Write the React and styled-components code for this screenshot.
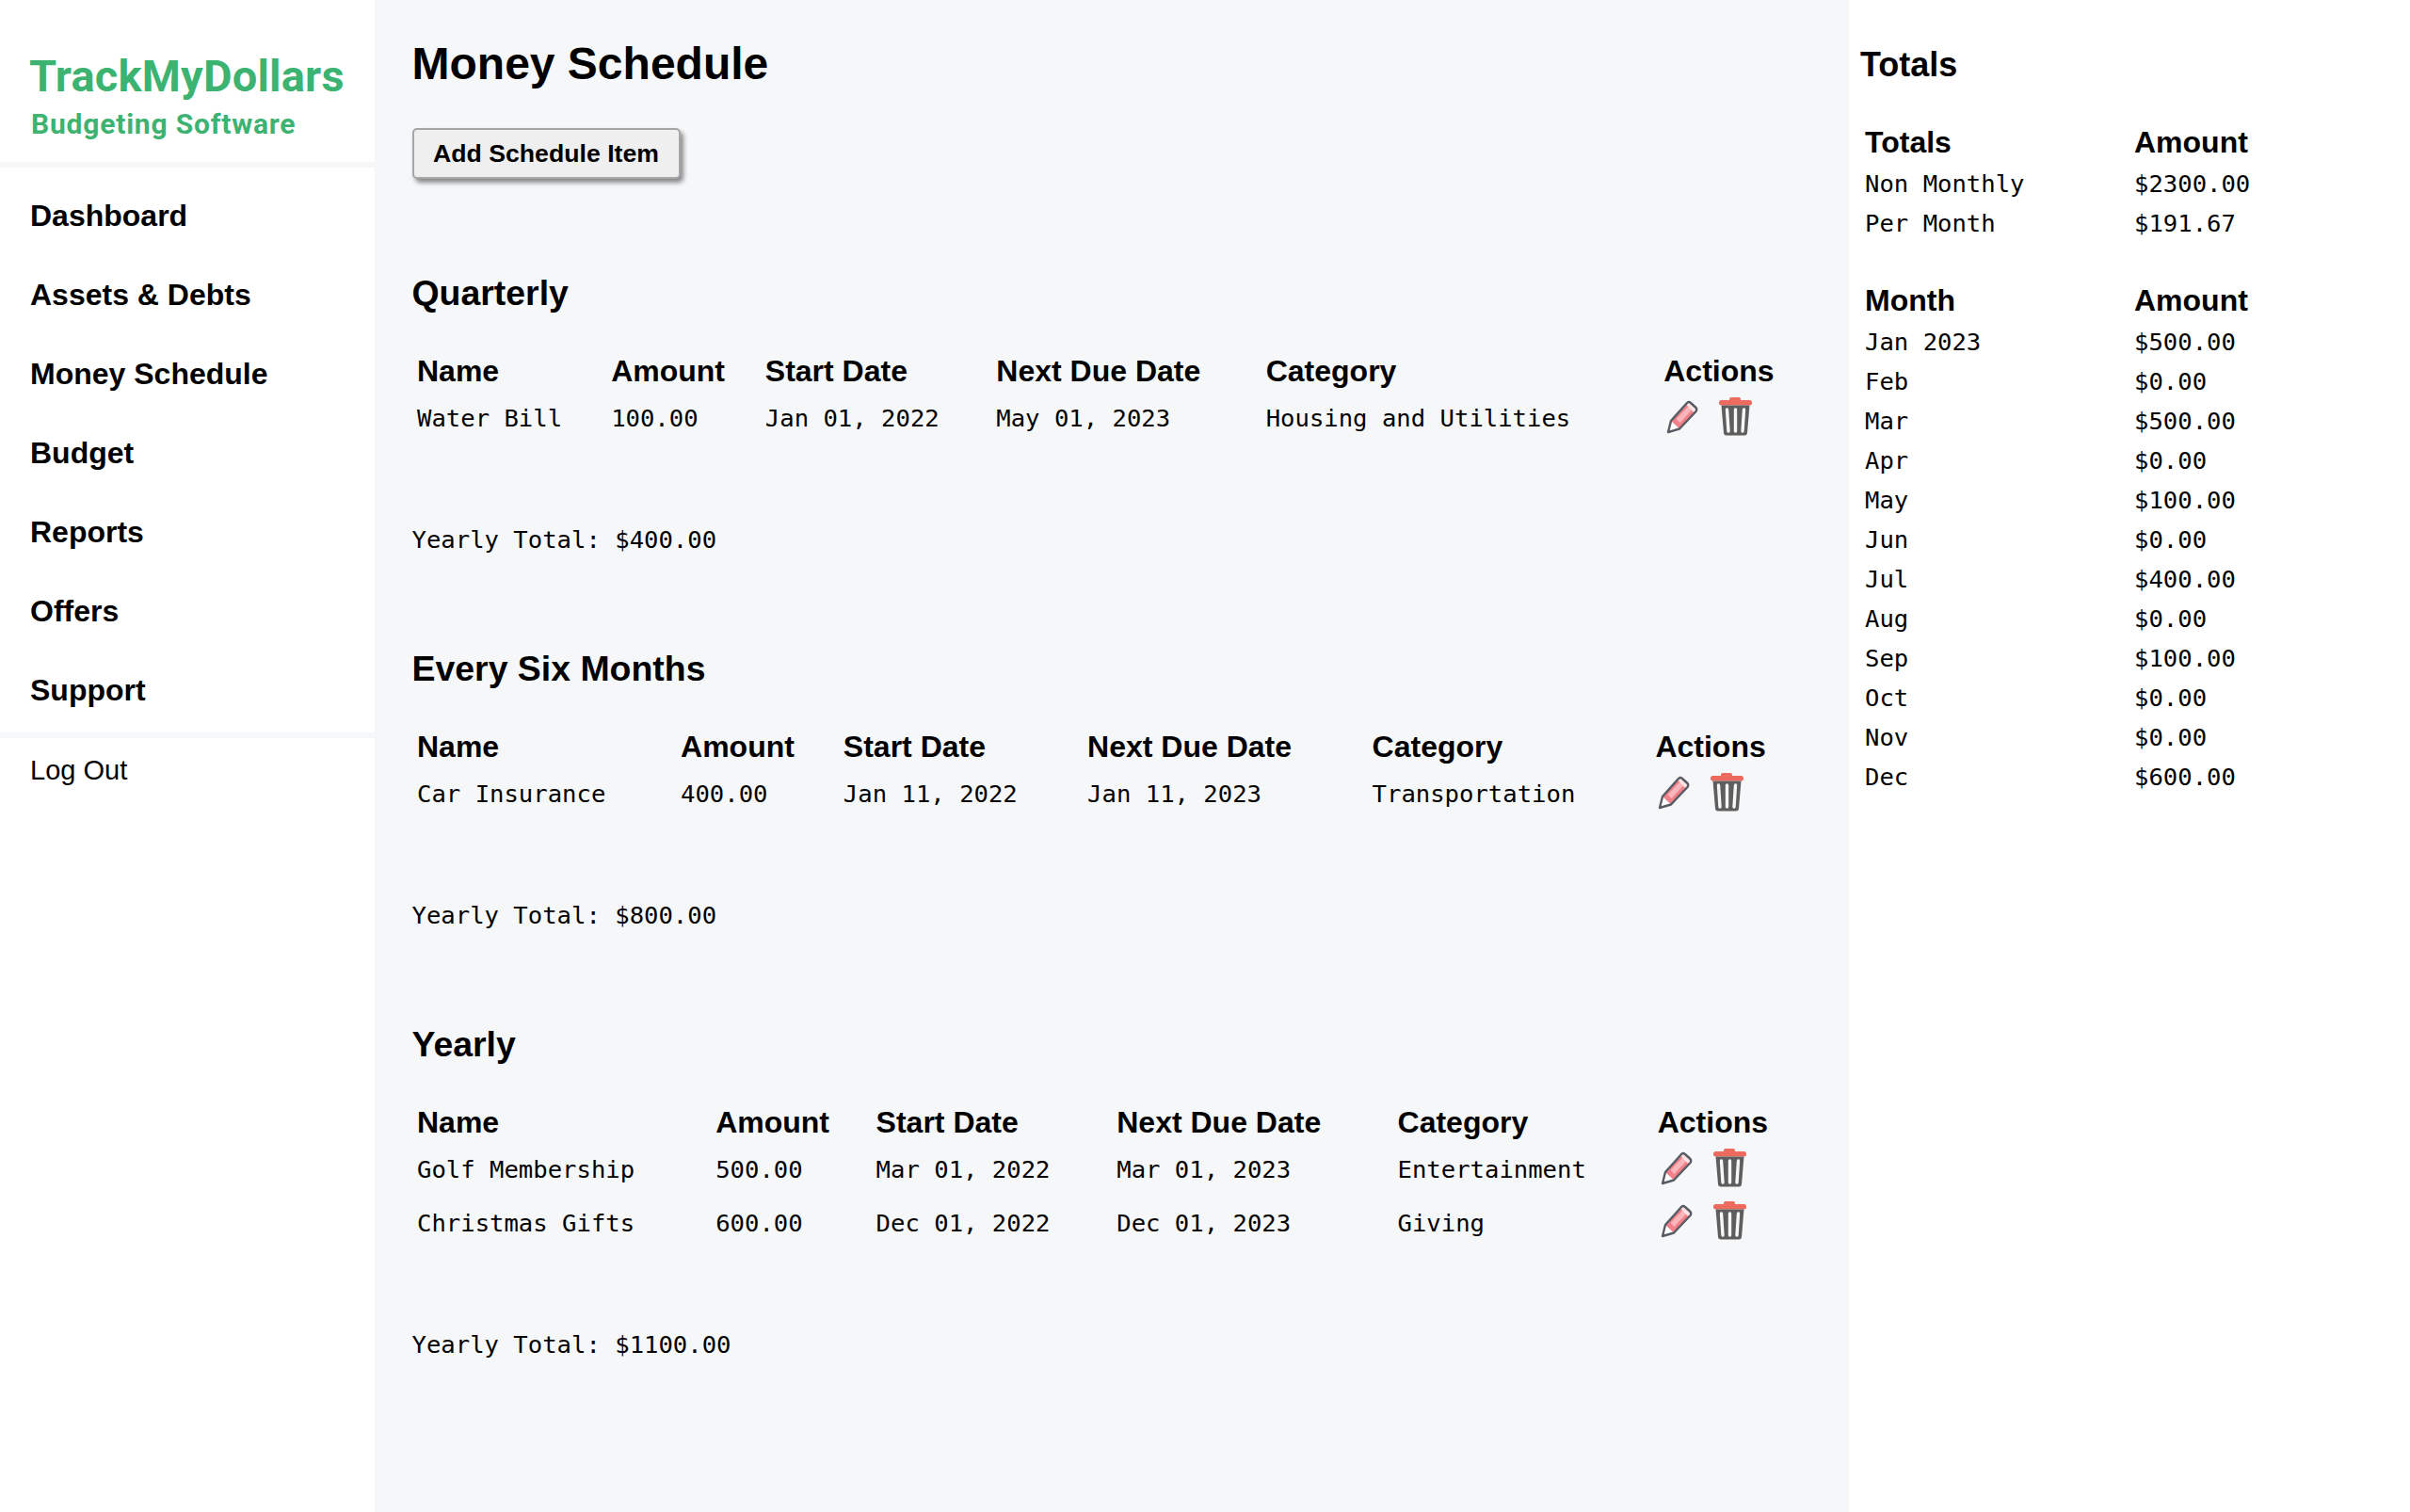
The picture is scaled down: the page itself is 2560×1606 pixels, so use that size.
import React from 'react'
import styled, {createGlobalStyle} from 'styled-components'

const GlobalStyle = createGlobalStyle`
  html, body {
    margin: 0;
    padding: 0;
    background: #fff;
    color: #000;
  }
  body {
    font-family: "Liberation Sans", Arial, sans-serif;
  }
`

const navItems = ['Dashboard', 'Assets & Debts', 'Money Schedule', 'Budget', 'Reports', 'Offers', 'Support']

const sections = [
  {
    title: 'Quarterly',
    total: '$400.00',
    rows: [['Water Bill', '100.00', 'Jan 01, 2022', 'May 01, 2023', 'Housing and Utilities']],
  },
  {
    title: 'Every Six Months',
    total: '$800.00',
    rows: [['Car Insurance', '400.00', 'Jan 11, 2022', 'Jan 11, 2023', 'Transportation']],
  },
  {
    title: 'Yearly',
    total: '$1100.00',
    rows: [
      ['Golf Membership', '500.00', 'Mar 01, 2022', 'Mar 01, 2023', 'Entertainment'],
      ['Christmas Gifts', '600.00', 'Dec 01, 2022', 'Dec 01, 2023', 'Giving'],
    ],
  },
]

const months = [
  ['Jan 2023', '$500.00'], ['Feb', '$0.00'], ['Mar', '$500.00'], ['Apr', '$0.00'],
  ['May', '$100.00'], ['Jun', '$0.00'], ['Jul', '$400.00'], ['Aug', '$0.00'],
  ['Sep', '$100.00'], ['Oct', '$0.00'], ['Nov', '$0.00'], ['Dec', '$600.00'],
]

const PencilIcon = () => (
  <svg width="40" height="40" viewBox="0 0 40 40">
    <path d="M5 37 L8 25 L25 6 Q27 4 29 6 L34.5 11 Q36 13 34.5 15 L17 33.5 Z" fill="#f0808a" />
    <path d="M13.5 23 L26.5 9.5 L30.5 13 L17.5 27 Z" fill="#f8b6bb" />
    <path d="M24 7.5 L26.5 5 Q27.5 4.5 28.5 5.5 L35 11.5 Q35.5 13 34.5 14.5 L32.5 16.5 Z" fill="#fbe3e4" />
    <path d="M5 37 L8 25 L17 33.5 Z" fill="#fff" />
    <path d="M5 37 L8 25 L25 6 Q27 4 29 6 L34.5 11 Q36 13 34.5 15 L17 33.5 Z" fill="none" stroke="#565b64" strokeWidth="2.4" strokeLinejoin="round" />
  </svg>
)

const TrashIcon = () => (
  <svg width="40" height="44" viewBox="0 0 40 44">
    <path d="M14 4 Q14 2 16 2 H24 Q26 2 26 4 V6 H14 Z" fill="#ec6a5e" />
    <rect x="3" y="5" width="35" height="5.5" rx="2.5" fill="#ec6a5e" />
    <path d="M5.5 10.5 H35.5 L33 40 Q32.7 42.5 30 42.5 H11 Q8.3 42.5 8 40 Z" fill="#5e5e5e" />
    <path d="M11.5 15 L13 38 M20.5 15 V38 M29.5 15 L28 38" stroke="#f6f7f9" strokeWidth="3.4" strokeLinecap="round" fill="none" />
  </svg>
)

const Page = styled.div`
  display: flex;
  min-height: 1606px;
`

const Sidebar = styled.aside`
  width: 398px;
  flex: none;
  background: #fff;
`

const Brand = styled.div`
  padding: 54px 0 0 31px;
  height: 118px;
  border-bottom: 6px solid #f6f7f9;
  color: #3cb371;
  font-family: Roboto, sans-serif;
  font-weight: 700;
`

const BrandName = styled.div`
  font-size: 47px;
  line-height: 54px;
  letter-spacing: 0.2px;
`

const BrandTag = styled.div`
  padding-left: 2px;
  font-size: 30px;
  line-height: 47px;
  letter-spacing: 0.8px;
`

const Nav = styled.nav`
  padding: 9px 0 3px;
  border-bottom: 6px solid #f6f7f9;
`

const NavItem = styled.a`
  display: block;
  padding: 0 32px;
  height: 84px;
  line-height: 84px;
  font-size: 32px;
  font-weight: 700;
  color: #000;
`

const LogOut = styled.a`
  display: block;
  padding: 0 32px;
  margin-top: 7px;
  line-height: 54px;
  font-size: 29px;
  color: #000;
`

const Main = styled.main`
  flex: 1;
  min-width: 0;
  background: #f6f7f9;
  padding: 35px 40px 0 39.5px;
`

const Title = styled.h1`
  margin: 0;
  font-size: 48px;
  line-height: 66px;
  font-weight: 700;
`

const AddButton = styled.button`
  display: block;
  margin-top: 35px;
  width: 285px;
  height: 54px;
  padding: 0;
  background: #efefef;
  border: 2px solid #a6a6a6;
  border-radius: 5px;
  box-shadow: 3px 4px 5px rgba(0, 0, 0, 0.45);
  font-family: inherit;
  font-size: 26.67px;
  font-weight: 700;
  color: #000;
`

const Section = styled.section`
  height: 399px;
  &:first-of-type {
    margin-top: 96px;
  }
`

const SectionTitle = styled.h3`
  margin: 0;
  font-size: 37.44px;
  line-height: 50px;
  font-weight: 700;
`

const ScheduleTable = styled.table`
  width: 100%;
  margin-top: 35px;
  border-spacing: 3.2px;
  border-collapse: separate;
`

const Th = styled.th`
  padding: 1.6px 2.5px;
  text-align: left;
  font-size: 32px;
  font-weight: 700;
  line-height: 37px;
`

const Td = styled.td`
  padding: 1.6px 2.5px;
  height: 50.5px;
  font-family: "DejaVu Sans Mono", monospace;
  font-size: 25.6px;
  white-space: nowrap;
`

const ActionCell = styled(Td)`
  line-height: 0;
`

const IconButton = styled.span`
  display: inline-block;
  vertical-align: middle;
  margin: 0 16px 5px 0;
`

const YearlyTotal = styled.p`
  margin: 84px 0 0;
  font-family: "DejaVu Sans Mono", monospace;
  font-size: 25.6px;
  line-height: 30px;
`

const Aside = styled.aside`
  width: 596px;
  flex: none;
  padding: 47px 0 0 12px;
  box-sizing: border-box;
  background: #fff;
`

const AsideTitle = styled.h3`
  margin: 0 0 37px;
  font-size: 36px;
  line-height: 44px;
  font-weight: 700;
`

const TotalsTable = styled.table`
  border-collapse: collapse;
  margin-bottom: 38px;
`

const TotalsTh = styled.th`
  width: ${({$wide}) => ($wide ? '281px' : 'auto')};
  padding: 0 0 0 5px;
  height: 46px;
  text-align: left;
  font-size: 32px;
  font-weight: 700;
`

const TotalsTd = styled.td`
  padding: 0 0 0 5px;
  height: 42px;
  font-family: "DejaVu Sans Mono", monospace;
  font-size: 25.6px;
`

const App = () => {
  return (
    <>
      <GlobalStyle />
      <Page>
        <Sidebar>
          <Brand>
            <BrandName>TrackMyDollars</BrandName>
            <BrandTag>Budgeting Software</BrandTag>
          </Brand>
          <Nav>
            {navItems.map((item) => <NavItem key={item}>{item}</NavItem>)}
          </Nav>
          <LogOut>Log Out</LogOut>
        </Sidebar>
        <Main>
          <Title>Money Schedule</Title>
          <AddButton type="button">Add Schedule Item</AddButton>
          {sections.map((section) => (
            <Section key={section.title}>
              <SectionTitle>{section.title}</SectionTitle>
              <ScheduleTable>
                <thead>
                  <tr>
                    {['Name', 'Amount', 'Start Date', 'Next Due Date', 'Category', 'Actions'].map((h) => <Th key={h}>{h}</Th>)}
                  </tr>
                </thead>
                <tbody>
                  {section.rows.map((row) => (
                    <tr key={row[0]}>
                      {row.map((cell) => <Td key={cell}>{cell}</Td>)}
                      <ActionCell>
                        <IconButton><PencilIcon /></IconButton>
                        <IconButton><TrashIcon /></IconButton>
                      </ActionCell>
                    </tr>
                  ))}
                </tbody>
              </ScheduleTable>
              <YearlyTotal>Yearly Total: {section.total}</YearlyTotal>
            </Section>
          ))}
        </Main>
        <Aside>
          <AsideTitle>Totals</AsideTitle>
          <TotalsTable>
            <thead>
              <tr><TotalsTh $wide>Totals</TotalsTh><TotalsTh>Amount</TotalsTh></tr>
            </thead>
            <tbody>
              <tr><TotalsTd>Non Monthly</TotalsTd><TotalsTd>$2300.00</TotalsTd></tr>
              <tr><TotalsTd>Per Month</TotalsTd><TotalsTd>$191.67</TotalsTd></tr>
            </tbody>
          </TotalsTable>
          <TotalsTable>
            <thead>
              <tr><TotalsTh $wide>Month</TotalsTh><TotalsTh>Amount</TotalsTh></tr>
            </thead>
            <tbody>
              {months.map(([m, v]) => <tr key={m}><TotalsTd>{m}</TotalsTd><TotalsTd>{v}</TotalsTd></tr>)}
            </tbody>
          </TotalsTable>
        </Aside>
      </Page>
    </>
  )
}

export default App
